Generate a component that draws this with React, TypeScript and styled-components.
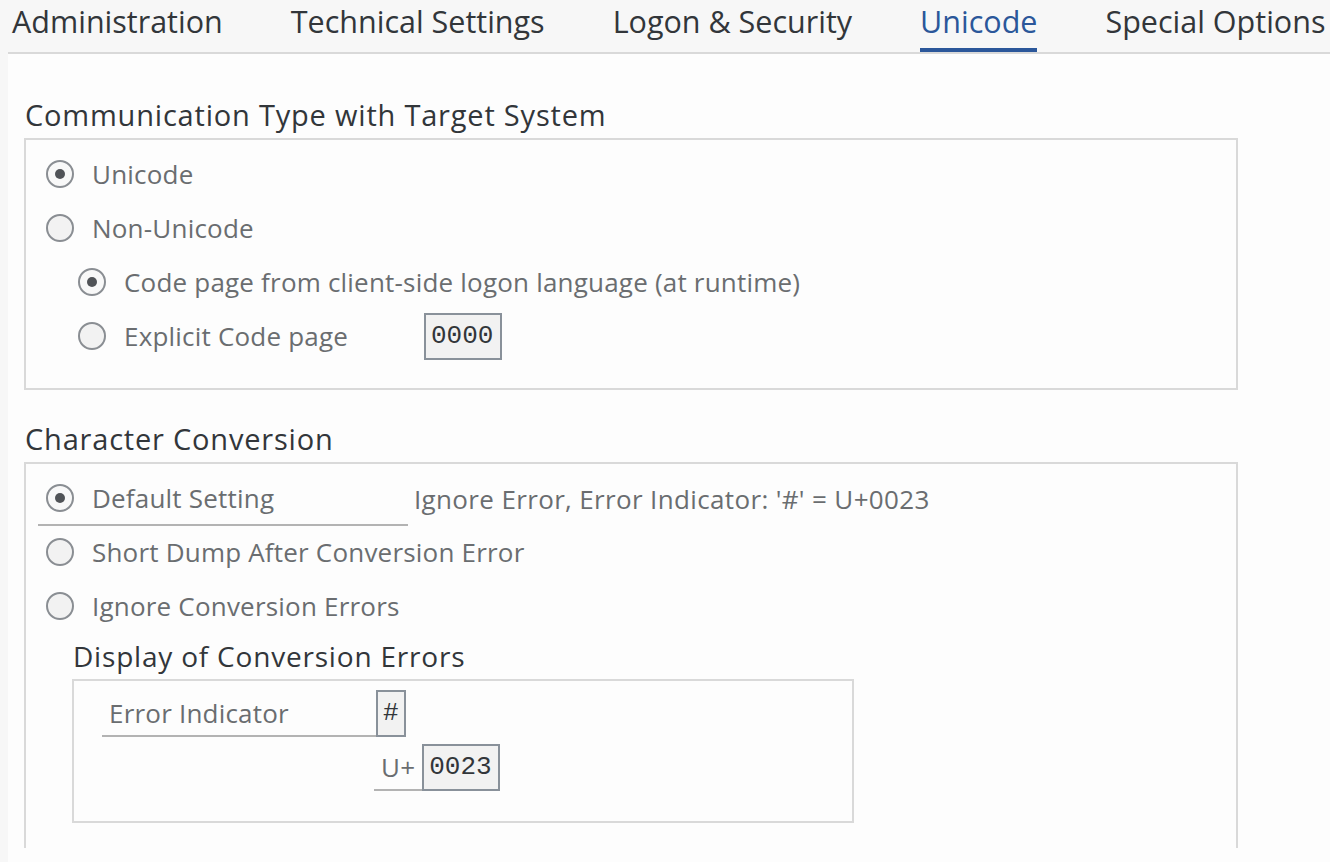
import * as React from "react";
import styled, { createGlobalStyle } from "styled-components";

const GlobalStyle = createGlobalStyle`
  html, body {
    margin: 0;
    padding: 0;
    background: #f7f7f7;
    font-family: "Open Sans", "Liberation Sans", sans-serif;
    overflow: hidden;
  }
`;

const Page = styled.div`
  width: 1330px;
  height: 862px;
  display: flex;
  flex-direction: column;
`;

const TabBar = styled.div`
  display: flex;
  align-items: stretch;
  gap: 68px;
  height: 52px;
  padding-left: 12px;
  white-space: nowrap;
  overflow: hidden;
`;

const Tab = styled.div<{ $active?: boolean }>`
  position: relative;
  font-size: 30.5px;
  line-height: 42px;
  color: ${p => (p.$active ? "#2b579a" : "#32363a")};

  ${p =>
    p.$active &&
    `
    &::after {
      content: "";
      position: absolute;
      left: 0;
      right: 0;
      bottom: -1px;
      height: 5px;
      background: #2b579a;
    }
  `}
`;

const Panel = styled.div`
  flex: 1;
  margin-left: 8px;
  border-top: 2px solid #d9d9d9;
  background: #fdfdfd;
  padding: 0 0 14px 16px;
  display: flex;
  flex-direction: column;
  min-height: 0;
`;

const Scroller = styled.div`
  flex: 1;
  overflow: hidden;
  padding-top: 42px;
`;

const SectionTitle = styled.div<{ $sub?: boolean }>`
  font-size: ${p => (p.$sub ? 28 : 29)}px;
  letter-spacing: 0.8px;
  line-height: 38px;
  color: #32363a;
  padding-left: 1px;
  margin-bottom: 4px;
  white-space: nowrap;
`;

const GroupBox = styled.div<{
  $width: number;
  $padTop?: number;
  $padBottom: number;
}>`
  width: ${p => p.$width}px;
  box-sizing: border-box;
  border: 2px solid #d9d9d9;
  padding: ${p => p.$padTop ?? 8}px 0 ${p => p.$padBottom}px 0;
  margin-bottom: 30px;
`;

const Row = styled.div<{ $indent?: number }>`
  display: flex;
  align-items: center;
  height: 54px;
  padding-left: ${p => 12 + (p.$indent ?? 0)}px;
`;

const OptionCell = styled.div<{ $width?: number; $underline?: boolean }>`
  display: flex;
  align-items: center;
  height: 100%;
  box-sizing: border-box;
  padding-left: 8px;
  width: ${p => (p.$width ? `${p.$width}px` : "auto")};
  border-bottom: 2px solid ${p => (p.$underline ? "#b3b3b3" : "transparent")};
`;

const RadioCircle = styled.span<{ $checked?: boolean }>`
  flex: none;
  width: 28px;
  height: 28px;
  box-sizing: border-box;
  border-radius: 50%;
  border: 2px solid #8a8e93;
  background: ${p => (p.$checked ? "#f8f8f8" : "#f2f2f2")};
  display: flex;
  align-items: center;
  justify-content: center;
  margin-right: 18px;

  &::after {
    content: "";
    width: 10px;
    height: 10px;
    border-radius: 50%;
    background: ${p => (p.$checked ? "#505357" : "transparent")};
  }
`;

const Label = styled.span<{ $width?: number }>`
  font-size: 26px;
  letter-spacing: 0.2px;
  line-height: 32px;
  color: #6a6d70;
  white-space: nowrap;
  width: ${p => (p.$width ? `${p.$width}px` : "auto")};
`;

const Description = styled.span`
  font-size: 26px;
  letter-spacing: 0.35px;
  line-height: 32px;
  color: #6a6d70;
  white-space: nowrap;
  margin-left: 6px;
`;

const CodeInput = styled.div<{ $width: number }>`
  width: ${p => p.$width}px;
  height: 47px;
  flex: none;
  box-sizing: border-box;
  border: 2px solid #89919a;
  background: #f2f2f2;
  font-family: "Liberation Mono", "DejaVu Sans Mono", monospace;
  font-size: 26px;
  line-height: 43px;
  color: #32363a;
  padding-left: 5px;
  white-space: nowrap;
`;

const SubGroup = styled.div`
  padding-left: 46px;
  margin-top: 3px;
`;

const FieldGrid = styled.div`
  display: grid;
  grid-template-columns: 274px auto;
  grid-auto-rows: 47px;
  row-gap: 7px;
  padding-left: 28px;
`;

const FieldLabel = styled.div`
  display: flex;
  align-items: center;
  box-sizing: border-box;
  height: 47px;
  border-bottom: 2px solid #b3b3b3;
  font-size: 26px;
  letter-spacing: 0.2px;
  color: #6a6d70;
  padding: 0 7px;
  white-space: nowrap;
`;

const FieldPair = styled.div`
  display: flex;
  align-items: stretch;
  margin-left: -2px;
`;

const Option: React.FC<{
  label: string;
  checked?: boolean;
  indent?: number;
}> = ({ label, checked, indent }) => (
  <Row $indent={indent}>
    <OptionCell>
      <RadioCircle $checked={checked} />
      <Label>{label}</Label>
    </OptionCell>
  </Row>
);

const tabs = [
  "Administration",
  "Technical Settings",
  "Logon & Security",
  "Unicode",
  "Special Options",
];

export default function App() {
  return (
    <>
      <GlobalStyle />
      <Page>
        <TabBar>
          {tabs.map(t => (
            <Tab key={t} $active={t === "Unicode"}>
              {t}
            </Tab>
          ))}
        </TabBar>
        <Panel>
          <Scroller>
            <SectionTitle>Communication Type with Target System</SectionTitle>
            <GroupBox $width={1214} $padBottom={24}>
              <Option label="Unicode" checked />
              <Option label="Non-Unicode" />
              <Option
                label="Code page from client-side logon language (at runtime)"
                checked
                indent={32}
              />
              <Row $indent={32}>
                <OptionCell>
                  <RadioCircle />
                  <Label $width={300}>Explicit Code page</Label>
                  <CodeInput $width={78}>0000</CodeInput>
                </OptionCell>
              </Row>
            </GroupBox>

            <SectionTitle>Character Conversion</SectionTitle>
            <GroupBox $width={1214} $padBottom={60}>
              <Row>
                <OptionCell $width={370} $underline>
                  <RadioCircle $checked />
                  <Label>Default Setting</Label>
                </OptionCell>
                <Description>
                  Ignore Error, Error Indicator: '#' = U+0023
                </Description>
              </Row>
              <Option label="Short Dump After Conversion Error" />
              <Option label="Ignore Conversion Errors" />
              <SubGroup>
                <SectionTitle $sub>Display of Conversion Errors</SectionTitle>
                <GroupBox $width={782} $padTop={9} $padBottom={30}>
                  <FieldGrid>
                    <FieldLabel>Error Indicator</FieldLabel>
                    <CodeInput $width={30}>#</CodeInput>
                    <div />
                    <FieldPair>
                      <FieldLabel>U+</FieldLabel>
                      <CodeInput $width={78}>0023</CodeInput>
                    </FieldPair>
                  </FieldGrid>
                </GroupBox>
              </SubGroup>
            </GroupBox>
          </Scroller>
        </Panel>
      </Page>
    </>
  );
}
